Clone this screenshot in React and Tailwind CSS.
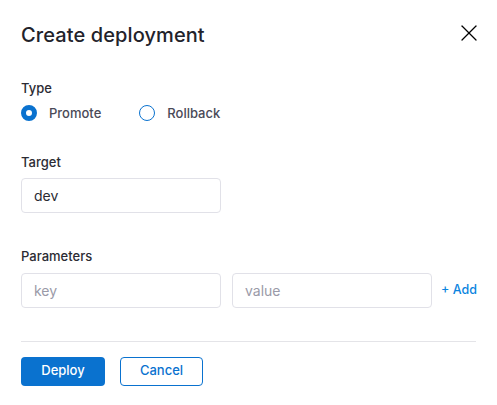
import { X } from "lucide-react";

function Radio({ checked, label }) {
    return (
        <label className="flex items-center gap-3">
            <span
                className={`h-4 w-4 rounded-full bg-white ${
                    checked ? "border-[5px] border-[#0a72cf]" : "border-[1.5px] border-[#0a72cf]"
                }`}
            />
            <span className="text-[13px] font-medium leading-4 text-[#4a4a57]">{label}</span>
        </label>
    );
}

export default function App() {
    return (
        <div className="h-[405px] w-[497px] bg-white px-[21px] font-['Inter',sans-serif] text-[#22222a]">
            {/* Header */}
            <div className="flex h-[70px] items-center justify-between pb-[1px]">
                <h1 className="text-[20px] font-medium tracking-[0.1px]">Create deployment</h1>
                <button className="-mr-[7px] mb-[3px] text-black">
                    <X size={28} strokeWidth={1.1} />
                </button>
            </div>

            {/* Type */}
            <div className="mt-[9px] text-[13px] font-medium text-[#2b2b33]">Type</div>
            <div className="mt-[6px] flex items-center gap-[38px]">
                <Radio checked label="Promote" />
                <Radio label="Rollback" />
            </div>

            {/* Target */}
            <div className="mt-[32px] text-[13px] font-medium text-[#2b2b33]">Target</div>
            <input
                readOnly
                value="dev"
                className="mt-[6px] block h-[35px] w-[200px] rounded-[4px] border border-[#e1e1e8] px-3 text-[14px] text-[#2b2b33] outline-none"
            />

            {/* Parameters */}
            <div className="mt-[34px] text-[13px] font-medium text-[#2b2b33]">Parameters</div>
            <div className="mt-[6px] flex items-center gap-[11px]">
                <input
                    placeholder="key"
                    className="block h-[35px] w-[200px] rounded-[4px] border border-[#e1e1e8] px-3 text-[14px] outline-none placeholder:text-[#9a9aa8]"
                />
                <input
                    placeholder="value"
                    className="block h-[35px] w-[200px] rounded-[4px] border border-[#e1e1e8] px-3 text-[14px] outline-none placeholder:text-[#9a9aa8]"
                />
                <button className="-ml-[2px] whitespace-nowrap text-[12.5px] font-medium text-[#0a84e0]">+ Add</button>
            </div>

            <div className="mt-[33px] h-px w-full bg-[#e4e4e8]" />

            {/* Footer */}
            <div className="mt-[15px] flex gap-[15px]">
                <button className="h-[29px] w-[84px] rounded-[4px] bg-[#0a72cf] text-[13px] font-medium text-white">
                    Deploy
                </button>
                <button className="h-[29px] w-[83px] rounded-[4px] border border-[#0a72cf] bg-white text-[13px] font-medium text-[#0a72cf]">
                    Cancel
                </button>
            </div>
        </div>
    );
}
